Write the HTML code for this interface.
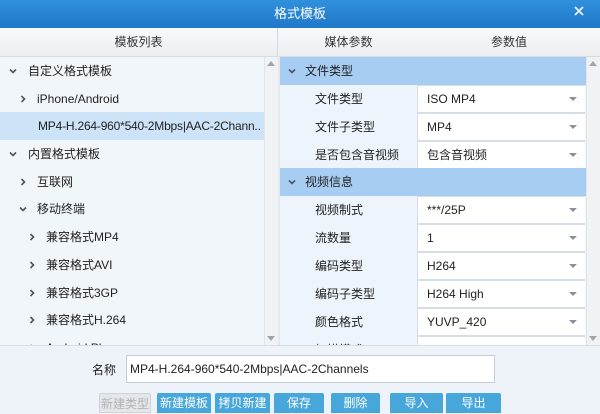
<!DOCTYPE html>
<html><head><meta charset="utf-8"><style>
*{margin:0;padding:0;box-sizing:border-box}
body{width:600px;height:412px;overflow:hidden;background:#eef3f9;font-family:"Liberation Sans","Noto Sans CJK SC",sans-serif;font-size:12px;color:#222;position:relative}
.abs{position:absolute}
.title{left:0;top:0;width:600px;height:28px;background:linear-gradient(#3090dc,#1f78c8);color:#fff;text-align:center;line-height:27px;font-size:13px}
.hdr{top:28px;height:29px;background:linear-gradient(#f8f9fa,#eceef0);border-bottom:1px solid #d4dbe2;text-align:center;line-height:29px;color:#333}
.left{left:0;top:57px;width:264px;height:288px;background:#f1f6fb;overflow:hidden}
.row{position:absolute;height:28px;line-height:28px;white-space:nowrap;overflow:hidden}
.sel{background:#cde3f7}
.arr{position:absolute;top:10px;width:8px;height:8px}
.sb{background:#f0f2f4;border-left:1px solid #e2e6ea}
.right{left:280px;top:57px;width:306px;height:288px;background:#eef4fb;overflow:hidden}
.sec{position:absolute;left:0;width:306px;height:28px;background:#a7cdf2;line-height:28px}
.p{position:absolute;left:0;width:137px;height:28px;line-height:28px;padding-left:35px}
.v{position:absolute;left:137px;width:168px;height:28px;background:#fff;border:1px solid #d6dde5;border-right:none;line-height:26px;padding-left:9px}
.v::after{content:"";position:absolute;right:8px;top:11px;border-left:4px solid transparent;border-right:4px solid transparent;border-top:4px solid #8a9099}
.btn{top:393px;height:20px;background:#47a6da;color:#fff;text-align:center;line-height:20px;border-radius:2px 2px 0 0}
</style></head><body>
<svg width="0" height="0" style="position:absolute"><defs>
<symbol id="d" viewBox="0 0 8 8"><path d="M1 2.5L4 5.5L7 2.5" fill="none" stroke="#4a5560" stroke-width="1.6"/></symbol>
<symbol id="r" viewBox="0 0 8 8"><path d="M2.5 1L5.5 4L2.5 7" fill="none" stroke="#4a5560" stroke-width="1.6"/></symbol>
</defs></svg>
<div class="abs title">格式模板</div>
<svg class="abs" style="left:574px;top:6px" width="10" height="10"><path d="M1 1L9 9M9 1L1 9" stroke="#e8f2fc" stroke-width="1.8"/></svg>
<div class="abs hdr" style="left:0;width:278px;border-right:1px solid #d4dbe2">模板列表</div>
<div class="abs hdr" style="left:279px;width:139px">媒体参数</div>
<div class="abs hdr" style="left:418px;width:182px">参数值</div>

<div class="abs left">
<div class="row" style="top:0;left:0;width:264px"><svg class="arr" style="left:9px"><use href="#d"/></svg><span style="position:absolute;left:28px">自定义格式模板</span></div>
<div class="row" style="top:28px;left:0;width:264px"><svg class="arr" style="left:19px"><use href="#r"/></svg><span style="position:absolute;left:37px">iPhone/Android</span></div>
<div class="row sel" style="top:55px;left:0;width:264px"><span style="position:absolute;left:38px;letter-spacing:-0.2px">MP4-H.264-960*540-2Mbps|AAC-2Chann..</span></div>
<div class="row" style="top:83px;left:0;width:264px"><svg class="arr" style="left:9px"><use href="#d"/></svg><span style="position:absolute;left:28px">内置格式模板</span></div>
<div class="row" style="top:111px;left:0;width:264px"><svg class="arr" style="left:19px"><use href="#r"/></svg><span style="position:absolute;left:37px">互联网</span></div>
<div class="row" style="top:138px;left:0;width:264px"><svg class="arr" style="left:19px"><use href="#d"/></svg><span style="position:absolute;left:37px">移动终端</span></div>
<div class="row" style="top:166px;left:0;width:264px"><svg class="arr" style="left:28px"><use href="#r"/></svg><span style="position:absolute;left:46px">兼容格式MP4</span></div>
<div class="row" style="top:194px;left:0;width:264px"><svg class="arr" style="left:28px"><use href="#r"/></svg><span style="position:absolute;left:46px">兼容格式AVI</span></div>
<div class="row" style="top:222px;left:0;width:264px"><svg class="arr" style="left:28px"><use href="#r"/></svg><span style="position:absolute;left:46px">兼容格式3GP</span></div>
<div class="row" style="top:249px;left:0;width:264px"><svg class="arr" style="left:28px"><use href="#r"/></svg><span style="position:absolute;left:46px">兼容格式H.264</span></div>
<div class="row" style="top:277px;left:0;width:264px"><svg class="arr" style="left:28px"><use href="#r"/></svg><span style="position:absolute;left:46px">Android Phone</span></div>
</div>
<div class="abs sb" style="left:264px;top:57px;width:14px;height:288px"></div>
<div class="abs" style="left:267px;top:61px;border:4px solid transparent;border-bottom:5px solid #a0a6ad;border-top:none"></div>
<div class="abs" style="left:267px;top:336px;border:4px solid transparent;border-top:5px solid #a0a6ad;border-bottom:none"></div>
<div class="abs" style="left:278px;top:57px;width:2px;height:288px;background:#e4e9ee"></div>

<div class="abs right">
<div class="sec" style="top:0"><svg class="arr" style="left:8px"><use href="#d"/></svg><span style="position:absolute;left:25px">文件类型</span></div>
<div class="p" style="top:28px">文件类型</div><div class="v" style="top:28px">ISO MP4</div>
<div class="p" style="top:56px">文件子类型</div><div class="v" style="top:56px">MP4</div>
<div class="p" style="top:84px">是否包含音视频</div><div class="v" style="top:84px">包含音视频</div>
<div class="sec" style="top:111px"><svg class="arr" style="left:8px"><use href="#d"/></svg><span style="position:absolute;left:25px">视频信息</span></div>
<div class="p" style="top:139px">视频制式</div><div class="v" style="top:139px">***/25P</div>
<div class="p" style="top:167px">流数量</div><div class="v" style="top:167px">1</div>
<div class="p" style="top:195px">编码类型</div><div class="v" style="top:195px">H264</div>
<div class="p" style="top:223px">编码子类型</div><div class="v" style="top:223px">H264 High</div>
<div class="p" style="top:251px">颜色格式</div><div class="v" style="top:251px">YUVP_420</div>
<div class="p" style="top:279px">扫描模式</div><div class="v" style="top:279px">Progressive</div>
</div>
<div class="abs sb" style="left:586px;top:57px;width:14px;height:288px"></div>
<div class="abs" style="left:589px;top:61px;border:4px solid transparent;border-bottom:5px solid #a0a6ad;border-top:none"></div>
<div class="abs" style="left:589px;top:336px;border:4px solid transparent;border-top:5px solid #a0a6ad;border-bottom:none"></div>

<div class="abs" style="left:0;top:345px;width:600px;height:67px;background:#eef3f9;border-top:1px solid #d8dee5"></div>
<div class="abs" style="left:92px;top:361px">名称</div>
<div class="abs" style="left:126px;top:355px;width:369px;height:28px;background:#fff;border:1px solid #c5ced8;line-height:26px;padding-left:3px">MP4-H.264-960*540-2Mbps|AAC-2Channels</div>
<div class="abs btn" style="left:99px;width:52px;background:#e4e7ea;color:#b0b4b8;border:1px solid #cfd3d7">新建类型</div>
<div class="abs btn" style="left:157px;width:54px">新建模板</div>
<div class="abs btn" style="left:215px;width:55px">拷贝新建</div>
<div class="abs btn" style="left:274px;width:50px">保存</div>
<div class="abs btn" style="left:331px;width:49px">删除</div>
<div class="abs btn" style="left:390px;width:53px">导入</div>
<div class="abs btn" style="left:446px;width:55px">导出</div>
</body></html>
